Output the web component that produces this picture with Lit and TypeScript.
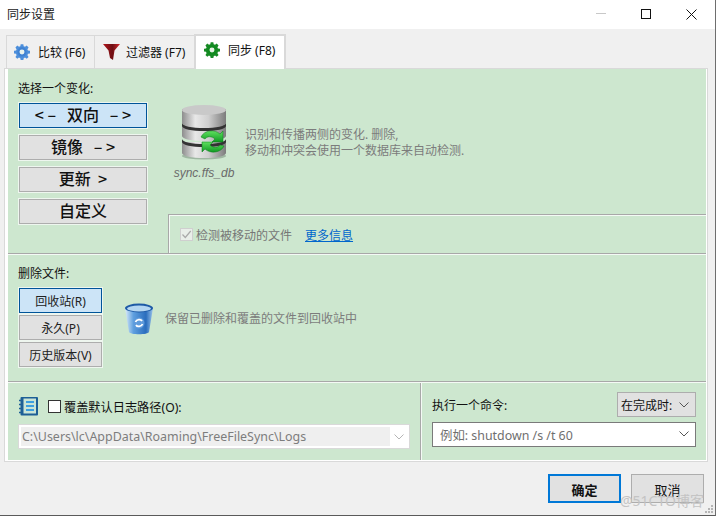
import { LitElement, html, css, svg } from "lit";
import { customElement } from "lit/decorators.js";

const gear = (c1: string, c2: string, hole: string) => svg`<svg width="16" height="16" viewBox="0 0 18 18">
  <path fill="${c1}" d="M7.5 0.8h3l.4 2.3 1.5.6 1.9-1.3 2.1 2.1-1.3 1.9.6 1.5 2.3.4v3l-2.3.4-.6 1.5 1.3 1.9-2.1 2.1-1.9-1.3-1.5.6-.4 2.3h-3l-.4-2.3-1.5-.6-1.9 1.3-2.1-2.1 1.3-1.9-.6-1.5-2.3-.4v-3l2.3-.4.6-1.5-1.3-1.9 2.1-2.1 1.9 1.3 1.5-.6z" transform="translate(0 -.6)"/>
  <circle cx="9" cy="8.9" r="5.2" fill="${c2}"/><circle cx="9" cy="8.9" r="2.8" fill="${hole}"/></svg>`;

@customElement("app-root")
export class AppRoot extends LitElement {
  static styles = css`
    :host { display: block; width: 716px; height: 516px; font-family: "Noto Sans", "Noto Sans CJK SC", sans-serif; font-size: 12px; color: #111; }
    * { box-sizing: border-box; }
    .win { position: relative; width: 716px; height: 516px; background: #f0f0f0; display: flex; flex-direction: column; border-right: 1px solid #6e6e6e; border-bottom: 1px solid #5a5a5a; overflow: hidden; }
    .title { height: 29px; flex: none; background: #fff; display: flex; align-items: center; padding: 0 18px 1px 7px; }
    .title .name { flex: 1; font-size: 12px; color: #222; }
    .caps { display: flex; gap: 35px; align-items: center; }
    .caps svg { display: block; }
    .tabs { height: 40px; flex: none; display: flex; align-items: flex-end; padding: 0 0 0 6px; margin-bottom: -1px; position: relative; z-index: 1; }
    .tab { height: 33px; margin-bottom: 1px; border: 1px solid #d9d9d9; border-bottom: 0; border-right: 0; display: flex; align-items: center; font-size: 12px; }
    .tab span { white-space: nowrap; }
    .t1 { width: 88px; padding-left: 7px; gap: 8px; }
    .t2 { width: 100px; padding-left: 8px; gap: 6px; }
    .t3 { width: 92px; height: 35px; margin-bottom: 0; background: #fff; border: 2px solid #d9d9d9; border-bottom: 0; padding: 0 0 5px 8px; gap: 8px; }
    .panel { width: 704px; height: 394px; margin-left: 4px; border: 1px solid #d9d9d9; background: #fff; padding: 0 1px 1px 3px; flex: none; }
    .green { height: 391px; background: #cde7cf; display: flex; flex-direction: column; }
    .sec1 { height: 185px; flex: none; display: flex; border-bottom: 1px solid #a8a8a8; }
    .col { width: 160px; flex: none; padding: 12px 0 0 11px; }
    .label { line-height: 16px; height: 16px; color: #111; white-space: nowrap; margin-left: -1px; }
    .bigs { display: flex; flex-direction: column; gap: 7px; margin-top: 6px; }
    .big { width: 128px; height: 25px; display: flex; align-items: center; justify-content: center; background: #e1e1e1; border: 1px solid #adadad; outline: 1px solid #eef6ef; font-size: 16px; font-weight: 500; line-height: 20px; padding-bottom: 3px; color: #111; white-space: pre; font-family: "Noto Sans CJK SC", sans-serif; }
    .big.sel { background: #cce4f7; border-color: #005499; }
    .right { flex: 1; display: flex; flex-direction: column; }
    .info { flex: 1; display: flex; padding: 35px 0 0 5px; }
    .db { width: 62px; display: flex; flex-direction: column; align-items: center; }
    .db svg { display: block; }
    .db i { font-size: 12px; color: #6b6b6b; line-height: 16px; margin-top: 5px; font-family: "Liberation Sans", sans-serif; }
    .hint { color: #7c7c7c; font-size: 12px; line-height: 16px; white-space: nowrap; }
    .info .hint { margin: 23px 0 0 10px; }
    .opt { height: 39px; flex: none; border-top: 1px solid #a8a8a8; border-left: 1px solid #a8a8a8; box-shadow: inset 1px 1px 0 #f4faf5; display: flex; align-items: center; padding: 1px 0 0 11px; color: #767676; }
    .box { width: 13px; height: 13px; flex: none; border: 1px solid #cfcfcf; background: #e9eee9; display: flex; align-items: center; justify-content: center; }
    .opt .box { margin-right: 3px; }
    .link { color: #0066cc; text-decoration: underline; margin-left: 13px; }
    .sec2 { height: 128px; flex: none; border-top: 1px solid #f4faf5; border-bottom: 1px solid #a8a8a8; padding: 11px 0 0 11px; }
    .del { display: flex; margin-top: 6px; }
    .smalls { display: flex; flex-direction: column; gap: 2px; }
    .small { width: 83px; height: 25px; display: flex; align-items: center; justify-content: center; background: #e1e1e1; border: 1px solid #adadad; outline: 1px solid #eef6ef; outline-offset: 0; font-size: 12px; color: #222; white-space: nowrap; }
    .small.sel { background: #cce4f7; border-color: #005499; }
    .bin { display: flex; align-items: center; margin: 14px 0 0 22px; height: 34px; }
    .bin svg { display: block; margin-right: 11px; }
    .sec3 { flex: 1; display: flex; border-top: 1px solid #f4faf5; }
    .logs { width: 412px; flex: none; padding: 14px 0 0 11px; }
    .row { display: flex; align-items: center; height: 20px; }
    .row span { font-size: 12.2px; }
    .row svg { display: block; margin-top: -2px; }
    .check { width: 13px; height: 13px; border: 1px solid #333; background: #fff; margin: -1px 3px 0 10px; }
    .combo { width: 392px; height: 25px; margin: 7px 0 0 -1px; background: #fff; border: 1px solid #d9d9d9; padding: 2px; display: flex; align-items: stretch; }
    .combo .v { width: 369px; background: #efefef; color: #7d7d7d; line-height: 20px; padding-left: 1px; white-space: nowrap; font-size: 12.45px; }
    .combo .a { flex: 1; display: flex; align-items: center; justify-content: center; }
    .cmd { flex: 1; border-left: 1px solid #a8a8a8; box-shadow: inset 1px 0 0 #f4faf5; padding: 9px 10px 0 11px; }
    .cmdtop { display: flex; align-items: center; justify-content: space-between; height: 25px; padding-top: 1px; }
    .mini { width: 79px; height: 25px; margin-top: -1px; background: #e1e1e1; border: 1px solid #adadad; display: flex; align-items: center; justify-content: space-between; padding: 0 6px 0 3px; white-space: nowrap; }
    .input { height: 25px; margin-top: 5px; background: #fff; border: 1px solid #7a7a7a; display: flex; align-items: center; justify-content: space-between; padding: 0 6px 0 7px; color: #6f6f6f; white-space: nowrap; font-size: 12.4px; }
    .input svg { margin-top: -1px; }
    .foot { flex: 1; display: flex; justify-content: flex-end; gap: 10px; padding: 12px 11px 0 0; }
    .btn { width: 73px; height: 29px; background: #e1e1e1; border: 1px solid #adadad; display: flex; align-items: center; justify-content: center; font-size: 13px; line-height: 18px; padding-top: 2px; color: #111; }
    .ok { border: 2px solid #0078d7; font-weight: 700; }
    .wm { position: absolute; left: 620px; top: 490px; font-size: 14px; color: #c4c4c4; white-space: nowrap; }
    .grip { position: absolute; right: 1px; bottom: 1px; }
    .grip svg { display: block; }
  `;

  private chev(c = "#555") {
    return html`<svg width="10" height="6" viewBox="0 0 10 6"><path d="M.5.5 5 5 9.5.5" fill="none" stroke="${c}"/></svg>`;
  }

  render() {
    return html`<div class="win">
      <div class="title">
        <div class="name">同步设置</div>
        <div class="caps">
          <svg width="10" height="10" viewBox="0 0 10 10"><path d="M0 4.5h10" stroke="#c8c8c8"/></svg>
          <svg width="10" height="10" viewBox="0 0 10 10"><rect x=".5" y=".5" width="9" height="9" fill="none" stroke="#111"/></svg>
          <svg width="11" height="11" viewBox="0 0 11 11"><path d="M.5.5l10 10M10.5.5l-10 10" fill="none" stroke="#111"/></svg>
        </div>
      </div>
      <div class="tabs">
        <div class="tab t1">${gear("#4d8fdb", "#3f82d3", "#e8f3ee")}<span>比较 (F6)</span></div>
        <div class="tab t2">
          <svg width="17" height="16" viewBox="0 0 17 16"><defs><linearGradient id="fn" x1="0" x2="1"><stop offset="0" stop-color="#b3151b"/><stop offset=".55" stop-color="#6e0f14"/><stop offset="1" stop-color="#d62a2e"/></linearGradient></defs><path fill="url(#fn)" d="M0 0h17l-5.5 6.5L10 16 7 14 5.5 6.5z"/></svg>
          <span>过滤器 (F7)</span>
        </div>
        <div class="tab t3">${gear("#168a24", "#0f8a1e", "#e4f2e4")}<span>同步 (F8)</span></div>
      </div>
      <div class="panel"><div class="green">
        <div class="sec1">
          <div class="col">
            <div class="label">选择一个变化:</div>
            <div class="bigs">
              <div class="big sel">&lt; –   双向   – &gt;</div>
              <div class="big">镜像   – &gt;</div>
              <div class="big">更新  &gt;</div>
              <div class="big">自定义</div>
            </div>
          </div>
          <div class="right">
            <div class="info">
              <div class="db">
                <svg width="46" height="56" viewBox="0 0 46 56">
                  <defs>
                    <linearGradient id="cy" x1="0" x2="1"><stop offset="0" stop-color="#8d8d8d"/><stop offset=".3" stop-color="#e8e8e8"/><stop offset=".6" stop-color="#cfcfcf"/><stop offset="1" stop-color="#7c7c7c"/></linearGradient>
                    <linearGradient id="ar" x1="0" y1="0" x2="0" y2="1"><stop offset="0" stop-color="#5fe05f"/><stop offset="1" stop-color="#0f9a22"/></linearGradient>
                  </defs>
                  <ellipse cx="23" cy="52" rx="22" ry="3.5" fill="#9fb7a2"/>
                  <path d="M1 38h44v11c0 3-10 5-22 5S1 52 1 49z" fill="url(#cy)"/>
                  <path d="M1 21h44v11c0 3-10 5-22 5S1 35 1 32z" fill="url(#cy)"/>
                  <path d="M1 5h44v14c0 3-10 5-22 5S1 22 1 19z" fill="url(#cy)"/>
                  <path d="M1 19c0 3 10 5 22 5s22-2 22-5v3c0 3-10 5-22 5S1 25 1 22zM1 35c0 3 10 5 22 5s22-2 22-5v3c0 3-10 5-22 5S1 41 1 38z" fill="#333"/>
                  <ellipse cx="23" cy="6" rx="22" ry="5" fill="#c9c9c9"/>
                  <path d="M20 33c3-7 14-8 19-3l3-3v11H31l3-3c-3-3-8-3-10 0z" fill="url(#ar)" stroke="#0a7a18" stroke-width=".5"/>
                  <path d="M43 42c-3 7-14 8-19 3l-3 3V38h11l-3 3c3 3 8 3 10 0z" fill="url(#ar)" stroke="#0a7a18" stroke-width=".5"/>
                </svg>
                <i>sync.ffs_db</i>
              </div>
              <div class="hint">识别和传播两侧的变化. 删除,<br />移动和冲突会使用一个数据库来自动检测.</div>
            </div>
            <div class="opt">
              <div class="box"><svg width="11" height="11" viewBox="0 0 11 11"><path d="M1.5 5.5 4.3 8.5 9.7 2" fill="none" stroke="#a9a9a9" stroke-width="1.2"/></svg></div>
              <span>检测被移动的文件</span>
              <span class="link">更多信息</span>
            </div>
          </div>
        </div>
        <div class="sec2">
          <div class="label">删除文件:</div>
          <div class="del">
            <div class="smalls">
              <div class="small sel">回收站(R)</div>
              <div class="small">永久(P)</div>
              <div class="small">历史版本(V)</div>
            </div>
            <div class="bin">
              <svg width="30" height="32" viewBox="0 0 30 32">
                <defs><linearGradient id="bn" x1="0" x2="1"><stop offset="0" stop-color="#dcecf9"/><stop offset=".3" stop-color="#5f9fdf"/><stop offset=".75" stop-color="#2a6dbd"/><stop offset="1" stop-color="#9cc4ea"/></linearGradient></defs>
                <path d="M1 5h28l-4 24c-1 3-19 3-20 0z" fill="url(#bn)"/>
                <ellipse cx="15" cy="5" rx="14" ry="4.4" fill="#1e5aa6"/>
                <ellipse cx="15" cy="5.5" rx="12" ry="3" fill="#b4d6f2"/>
                <circle cx="15" cy="20" r="5.5" fill="#5f9bdc"/>
                <path d="M11.5 19c1-3 5.500-3 6.500-1M18.500 21c-1 3-5.500 3-6.500 1" fill="none" stroke="#fff" stroke-width="1.7"/>
              </svg>
              <span class="hint">保留已删除和覆盖的文件到回收站中</span>
            </div>
          </div>
        </div>
        <div class="sec3">
          <div class="logs">
            <div class="row">
              <svg width="19" height="19" viewBox="0 0 19 19"><rect x="1.500" y="0" width="17.500" height="18.500" rx="1" fill="#1d5f96"/><rect x="4.500" y="1.500" width="12.500" height="15" fill="#c9e4d6"/><path d="M7 5h8M7 9h8M7 13h8" stroke="#3d9fe0" stroke-width="2"/><path d="M0 3.500h4M0 7.500h4M0 11.500h4M0 15.500h4" stroke="#1d5f96" stroke-width="1.500"/></svg>
              <div class="check"></div>
              <span>覆盖默认日志路径(O):</span>
            </div>
            <div class="combo"><div class="v">C:\\Users\\lc\\AppData\\Roaming\\FreeFileSync\\Logs</div><div class="a">${this.chev("#b5b5b5")}</div></div>
          </div>
          <div class="cmd">
            <div class="cmdtop"><span>执行一个命令:</span><div class="mini"><span>在完成时:</span>${this.chev()}</div></div>
            <div class="input"><span>例如: shutdown /s /t 60</span>${this.chev()}</div>
          </div>
        </div>
      </div></div>
      <div class="foot"><div class="btn ok">确定</div><div class="btn">取消</div></div>
      <div class="wm">@51CTO博客</div>
      <div class="grip"><svg width="10" height="10" viewBox="0 0 10 10"><path fill="#b5b5b5" d="M7 1h2v2H7zM4 4h2v2H4zM7 4h2v2H7zM1 7h2v2H1zM4 7h2v2H4zM7 7h2v2H7z"/></svg></div>
    </div>`;
  }
}
